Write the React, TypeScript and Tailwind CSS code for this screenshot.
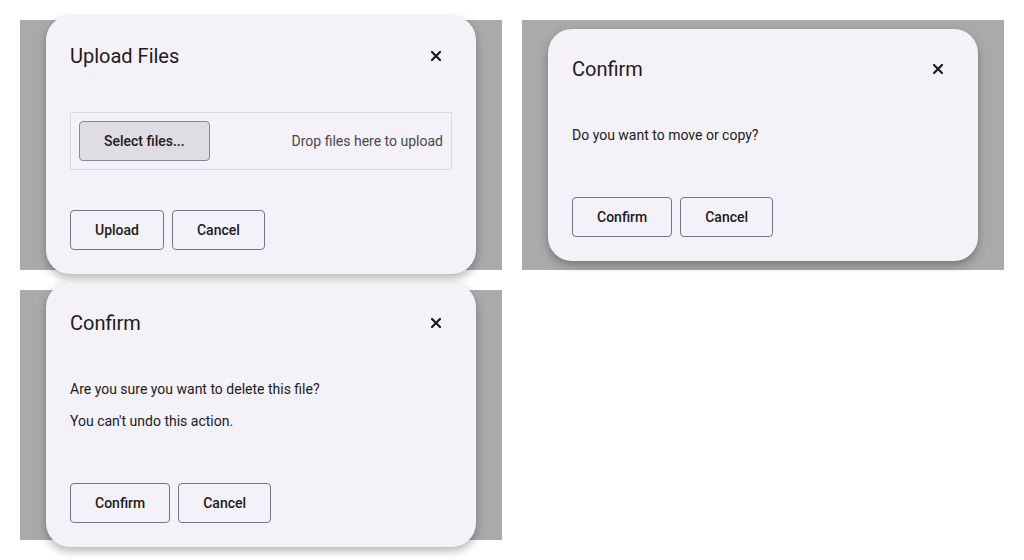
const font = { fontFamily: 'Roboto, "Liberation Sans", sans-serif' };

const CloseIcon = () => (
  <svg width="10" height="10" viewBox="0 0 10 10" className="text-[#1d1b20]">
    <path d="M1 1L9 9M9 1L1 9" stroke="currentColor" strokeWidth="2.2" strokeLinecap="square" />
  </svg>
);

const OutlineButton = ({ label }: { label: string }) => (
  <button className="h-10 px-6 rounded border border-[#79747e] bg-transparent text-sm font-medium text-[#1d1b20]">
    {label}
  </button>
);

const Dialog = ({ title, children, actions }: { title: string; children: React.ReactNode; actions: string[] }) => (
  <div className="w-[430px] shrink-0 rounded-3xl bg-[#f4f1f8] pt-6 pb-6 pl-6 pr-5 shadow-[0_4px_10px_rgba(0,0,0,0.3)]">
    <div className="flex items-center justify-between h-8">
      <h2 className="text-xl leading-8 text-[#1d1b20]">{title}</h2>
      <button className="w-10 h-10 flex items-center justify-center">
        <CloseIcon />
      </button>
    </div>
    <div className="mt-10 pr-1 flex flex-col">{children}</div>
    <div className="mt-10 flex gap-2">
      {actions.map((a) => (
        <OutlineButton key={a} label={a} />
      ))}
    </div>
  </div>
);

const Backdrop = ({ children }: { children: React.ReactNode }) => (
  <div className="h-[250px] bg-[#aaaaaa] flex items-center justify-center">{children}</div>
);

export default function App() {
  return (
    <div className="w-[1024px] h-[560px] bg-white p-5 grid grid-cols-2 gap-5 content-start" style={font}>
      <Backdrop>
        <Dialog title="Upload Files" actions={['Upload', 'Cancel']}>
          <div className="h-[58px] border border-[#dcd9e0] flex items-center justify-between pl-2 pr-2">
            <button className="h-10 px-6 rounded border border-[#8c8892] bg-[#e0dce3] text-sm font-medium text-[#1d1b20]">
              Select files...
            </button>
            <span className="text-sm text-[#49454f]">Drop files here to upload</span>
          </div>
        </Dialog>
      </Backdrop>
      <Backdrop>
        <Dialog title="Confirm" actions={['Confirm', 'Cancel']}>
          <p className="text-sm leading-5 text-[#1d1b20] mb-3">Do you want to move or copy?</p>
        </Dialog>
      </Backdrop>
      <Backdrop>
        <Dialog title="Confirm" actions={['Confirm', 'Cancel']}>
          <p className="text-sm leading-5 text-[#1d1b20] mb-3">Are you sure you want to delete this file?</p>
          <p className="text-sm leading-5 text-[#1d1b20] mb-3">You can't undo this action.</p>
        </Dialog>
      </Backdrop>
    </div>
  );
}
